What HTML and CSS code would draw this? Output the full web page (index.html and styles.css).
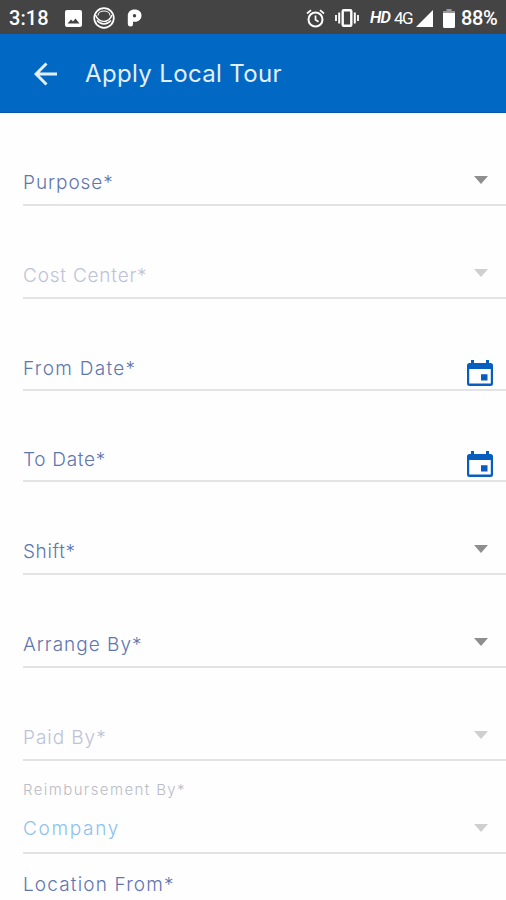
FILE: index.html
```
<!DOCTYPE html>
<html lang="en">
<head>
<meta charset="utf-8">
<title>Apply Local Tour</title>
<link rel="stylesheet" href="styles.css">
</head>
<body>
<svg width="0" height="0" class="defs">
  <symbol id="caret" viewBox="0 0 14 8"><path d="M0 0h14L7 8z"/></symbol>
  <symbol id="calendar" viewBox="0 0 26 26"><path fill-rule="evenodd" d="M4 0h3v3h12V0h3v3h1.500Q26 3 26 5.500V23.500Q26 26 23.500 26H2.500Q0 26 0 23.500V5.500Q0 3 2.500 3H4zM2.200 9v14.600h21.600V9zM14 14.200h6.500v6.300H14z"/></symbol>
</svg>
<div class="status">
  <span class="time">3:18</span>
  <svg class="photo" width="17" height="17" viewBox="0 0 17 17"><path fill="#fff" fill-rule="evenodd" d="M2 0h13q2 0 2 2v13q0 2-2 2H2q-2 0-2-2V2q0-2 2-2zM2.500 13.500h12L10.500 8.500 8 11.500 6 9.500z"/></svg>
  <svg class="ring" width="22" height="22" viewBox="0 0 22 22" fill="none" stroke="#fff"><circle cx="11" cy="11" r="9.800" stroke-width="1.700"/><path d="M5 8.500C5 2.500 17 2.500 17 8.500" stroke-width="1.100"/><path d="M2.500 8c3 8 13 9 16.500 0M4 13.500c4 4.500 10 4.500 14 0" stroke-width="1.500"/></svg>
  <svg class="pmark" width="15" height="18" viewBox="0 0 15 18"><path fill="#fff" fill-rule="evenodd" d="M7.500 0.500C12 .5 14.500 3 14.500 6.500s-2.700 6.300-6.500 6.300H6V15q0 2.500-2.500 2.500T.8 15V7C.8 3 3.500.5 7.500.5zM7.500 5a1.700 1.700 0 1 0 0 3.400 1.700 1.700 0 1 0 0-3.400z"/></svg>
  <span class="gap"></span>
  <svg class="alarm" width="19" height="19" viewBox="0 0 19 19" fill="none" stroke="#fff"><circle cx="9.500" cy="10.500" r="7" stroke-width="2"/><path d="M9.500 6.500v4.300l3 2M1 4.500 5 1.200M18 4.500 14 1.200" stroke-width="1.700"/></svg>
  <svg class="vibrate" width="24" height="18" viewBox="0 0 24 18" fill="none" stroke="#fff"><rect x="7.700" y="1.200" width="8.600" height="15.600" rx="1" stroke-width="2.400"/><path d="M4.200 3.500v11M19.800 3.500v11" stroke-width="2"/><path d="M1 6v6M23 6v6" stroke-width="1.800"/></svg>
  <span class="hd">HD</span>
  <span class="net">4G</span>
  <svg class="signal" width="17" height="17" viewBox="0 0 17 17"><path fill="#fff" d="M17 0v17H0z"/></svg>
  <svg class="battery" width="12" height="19" viewBox="0 0 12 19"><path fill="#999" d="M3.500 0h5v2H12v3H0V2h3.500z"/><path fill="#fff" d="M0 4h12v13.500q0 1.500-1.500 1.500h-9Q0 19 0 17.500z"/></svg>
  <span class="percent">88%</span>
</div>
<header class="bar">
  <svg class="back" width="24" height="24" viewBox="0 0 24 24" fill="none" stroke="#e3efff" stroke-width="3"><path d="M23 12H2.500M12.500 1.500 2 12l10.500 10.500"/></svg>
  <h1>Apply Local Tour</h1>
</header>
<main class="form">
  <div class="field"><span class="label purpose">Purpose*</span><svg class="caret"><use href="#caret"/></svg></div>
  <div class="field disabled"><span class="label cost">Cost Center*</span><svg class="caret"><use href="#caret"/></svg></div>
  <div class="field date from-row"><span class="label from">From Date*</span><svg class="calendar"><use href="#calendar"/></svg></div>
  <div class="field date to-row"><span class="label to">To Date*</span><svg class="calendar"><use href="#calendar"/></svg></div>
  <div class="field"><span class="label shift">Shift*</span><svg class="caret"><use href="#caret"/></svg></div>
  <div class="field"><span class="label arrange">Arrange By*</span><svg class="caret"><use href="#caret"/></svg></div>
  <div class="field disabled"><span class="label paid">Paid By*</span><svg class="caret"><use href="#caret"/></svg></div>
  <div class="field disabled filled"><div class="stack"><span class="small">Reimbursement By*</span><span class="label value">Company</span></div><svg class="caret"><use href="#caret"/></svg></div>
  <div class="last"><span class="label location">Location From*</span></div>
</main>
</body>
</html>
```
FILE: styles.css
```
* { box-sizing: border-box; }
body { margin: 0; width: 506px; height: 900px; overflow: hidden; background: #fefefe; font-family: Inter, "Liberation Sans", sans-serif; }
svg { display: block; flex: none; }
.defs { position: absolute; }
.status { display: flex; align-items: center; height: 34px; padding: 2px 8px 0 9px; background: #444; color: #fff; font-family: Roboto, sans-serif; font-size: 20px; line-height: 32px; white-space: nowrap; }
.time { width: 56px; font-weight: 500; letter-spacing: .1px; }
.ring { margin-left: 11px; }
.pmark { margin-left: 12px; margin-right: 1px; }
.gap { flex: 1; }
.vibrate { margin-left: 10px; }
.hd { width: 23px; margin-left: 11px; font-size: 16.5px; font-weight: 600; font-style: italic; letter-spacing: -.8px; }
.net { width: 19px; margin-left: 1px; font-size: 17px; letter-spacing: -1.6px; font-weight: 400; }
.signal { margin-left: 3px; }
.battery { margin-left: 10px; }
.percent { width: 37px; margin-left: 6px; font-weight: 500; letter-spacing: -.4px; }
.bar { display: flex; align-items: center; height: 79px; padding: 1px 0 0 34px; background: #0168c3; border-bottom: 1px solid #0757ad; }
h1 { margin: 0 0 0 27px; font-size: 24px; line-height: 30px; font-weight: 400; color: #e3efff; letter-spacing: .35px; white-space: nowrap; }
.form { padding-left: 23px; }
.field { display: flex; justify-content: space-between; align-items: flex-end; height: 93px; padding: 0 18px 9px 0; border-bottom: 2px solid #e3e3e3; }
.date { padding-right: 13px; padding-bottom: 8px; }
.from-row { height: 92px; }
.to-row { height: 91px; }
.label { font-size: 19px; line-height: 24px; font-weight: 300; color: #5f76b0; white-space: nowrap; }
.purpose { letter-spacing: .95px; }
.cost { letter-spacing: .8px; }
.from { letter-spacing: 1.3px; }
.to { letter-spacing: .7px; }
.shift { letter-spacing: .6px; }
.arrange { letter-spacing: 1px; }
.paid { letter-spacing: .95px; }
.value { letter-spacing: 1.7px; }
.location { letter-spacing: 1.15px; }
.caret { width: 14px; height: 8px; margin-bottom: 11px; fill: #8e8e8e; }
.disabled .label { color: #bdc3d6; }
.disabled .caret { fill: #cfcfcf; }
.calendar { width: 26px; height: 26px; margin-bottom: -5px; fill: #075ebe; }
.filled { padding-bottom: 11px; }
.filled .caret { margin-bottom: 9px; }
.stack { display: flex; flex-direction: column; gap: 17px; }
.small { font-size: 15px; line-height: 20px; font-weight: 300; color: #b9bcc8; letter-spacing: 1.4px; }
.disabled .value { color: #8cc2ee; }
.last { padding-top: 19px; }
```
